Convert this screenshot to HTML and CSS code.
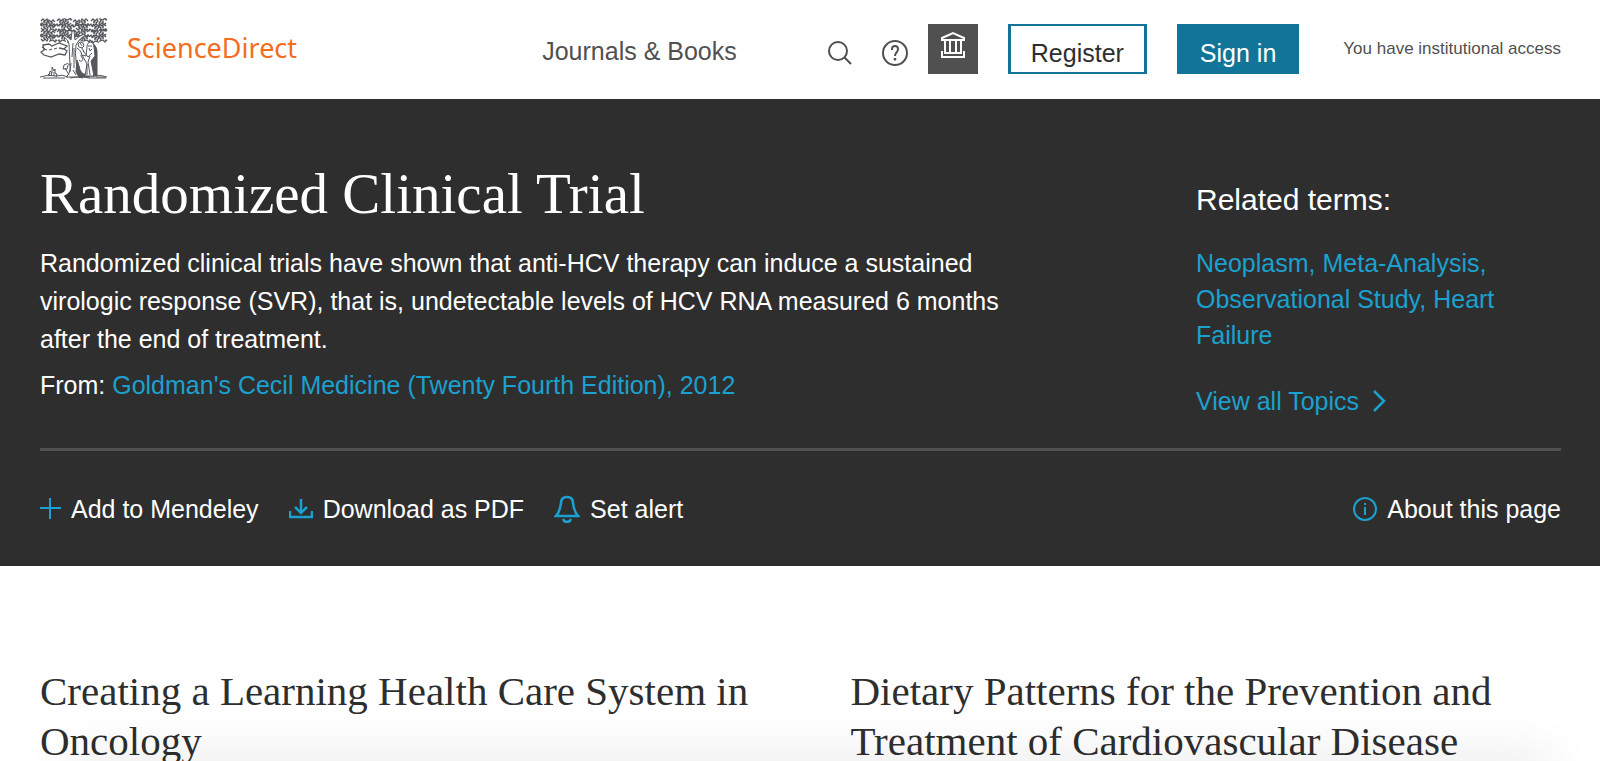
FILE: index.html
```
<!DOCTYPE html>
<html lang="en">
<head>
    <meta charset="UTF-8">
    <meta name="viewport" content="width=device-width, initial-scale=1.0">
    <title>Randomized Clinical Trial - ScienceDirect Topics</title>
    <link rel="stylesheet" href="styles.css">
</head>
<body>
    <header class="header">
        <a class="brand" href="#">
            <svg class="tree" viewBox="0 0 68 62" fill="none" stroke="#54575b" stroke-width="1" aria-hidden="true">
                <defs>
                    <path id="leaf" stroke-width="1.300" d="M1 3l2-2 2 2 2-2 1 2-2 2 1 2-3-1-2 2-1-2-1 1M3 4h2"/>
                    <g id="row">
                        <use href="#leaf"/>
                        <use href="#leaf" transform="translate(16 1) scale(-1 1)"/>
                        <use href="#leaf" x="16"/>
                        <use href="#leaf" transform="translate(32 8) rotate(180)"/>
                        <use href="#leaf" x="32" y="1"/>
                        <use href="#leaf" transform="translate(49 0) scale(-1 1)"/>
                        <use href="#leaf" x="50"/>
                        <use href="#leaf" transform="translate(67 8) rotate(180)"/>
                    </g>
                </defs>
                <use href="#row"/>
                <use href="#row" transform="translate(67 5) scale(-1 1)"/>
                <use href="#row" y="11"/>
                <use href="#row" transform="translate(67 16) scale(-1 1)"/>
                <!-- trunk and branches -->
                <path fill="#fff" d="M29 26q0-4-6-8l1-1q5 3 7 5l1-9h2l1 9q4-4 9-6l1 1q-7 5-9 10q-1 10 0 15l1 10q2 4 8 7H26q5-4 4-12z"/>
                <path d="M33 25l-1 14M34 30v20M31 45l-1 9M33 52l3 5M37 30q6 4 4 8l2 3q-1 4-4 1M24 47q4-3 6 0M24 47l-1 4h4l1-4M25 50l4 7"/>
                <!-- banner -->
                <path stroke-width="1.300" d="M3 27l6-1 3 2 7-3 8 3-3 3 3 2-2 4-6-1-8 3-7-2-3-3 3-2zM4 31l3 1M9 32l3-1M14 31l3-1M19 30l5 1M2 29l3 2"/>
                <!-- old man -->
                <path fill="#54575b" d="M51 25q5 1 6 8v25h-8l2-14zM37 42l2 6 1 4 3 4h5l2 3H39l-3-5z"/>
                <path fill="#fff" d="M47 29q0-5 4-5q3 1 3 5l1 9-4 5 3 15h-9l2-12-5-9 4 1z"/>
                <path d="M48 28h4M49 30l1 3 2-2M43 33l5 6 4-4M50 38l-2 6 2 13M47 46v11M38 26l2-2 3 1 1 3-2 2-3-1zM40 25l2 3M42 30l2 4"/>
                <!-- ground -->
                <path d="M0 59q8-3 16-1q7-2 12 1M3 60h22M30 60q8-2 13 0M42 58l6 2h18M53 58q7-2 14 1M56 59h10"/>
                <path d="M9 58l1-5 2 2v-6l2 4 1-2v4l2 1-1 3M11 55l1 3M14 54v4M8 56l2 2"/>
            </svg>
            <span class="wordmark">ScienceDirect</span>
        </a>
        <nav class="nav">
            <a class="journals" href="#">Journals &amp; Books</a>
            <button class="icon-btn search" type="button" aria-label="Search">
                <svg width="24" height="24" viewBox="0 0 24 24" fill="none" stroke="#505050" stroke-width="2"><circle cx="10" cy="10" r="9"/><path d="M16 16l7 7"/></svg>
            </button>
            <button class="icon-btn help" type="button" aria-label="Help">
                <svg width="26" height="26" viewBox="0 0 26 26" fill="none" stroke="#505050" stroke-width="2"><circle cx="13" cy="13" r="12"/><path d="M10 10V9q0-3 3-3t3 3q0 2-1.500 3.500T13 16"/><path d="M13 18v2.500" stroke-width="2.500"/></svg>
            </button>
            <button class="institution" type="button" aria-label="Institutional access">
                <svg width="26" height="28" viewBox="0 0 26 28" fill="none" stroke="#fff" stroke-width="2"><path d="M2 9V7l11-5 11 5v2zM5 10v12M10 10v12M16 10v12M21 10v12M4 22h18M2 20v6h22v-6"/></svg>
            </button>
            <a class="btn" href="#">Register</a>
            <a class="btn btn-primary" href="#">Sign in</a>
            <span class="access">You have institutional access</span>
        </nav>
    </header>

    <section class="hero">
        <div class="hero-top">
            <div class="summary">
                <h1>Randomized Clinical Trial</h1>
                <p class="definition">Randomized clinical trials have shown that anti-HCV therapy can induce a sustained virologic response (SVR), that is, undetectable levels of HCV RNA measured 6 months after the end of treatment.</p>
                <p class="source">From: <a href="#">Goldman's Cecil Medicine (Twenty Fourth Edition), 2012</a></p>
            </div>
            <aside class="related">
                <h2>Related terms:</h2>
                <p class="terms"><a href="#">Neoplasm, </a><a href="#">Meta-Analysis, </a><a href="#">Observational Study, </a><a href="#">Heart Failure</a></p>
                <a class="view-all" href="#">View all Topics
                    <svg width="14" height="22" viewBox="0 0 14 22" fill="none" stroke="#1ba1cf" stroke-width="2.500"><path d="M2 1l10 10L2 21"/></svg>
                </a>
            </aside>
        </div>
        <div class="toolbar">
            <button class="tool" type="button">
                <svg width="21" height="21" viewBox="0 0 21 21" fill="none" stroke="#1ba1cf" stroke-width="2"><path d="M10 0v21M0 10h21"/></svg>
                Add to Mendeley
            </button>
            <button class="tool" type="button">
                <svg width="24" height="20" viewBox="0 0 24 20" fill="none" stroke="#1ba1cf" stroke-width="2.500"><path d="M12 0v13M6 8l6 6 6-6M1 12v6h22v-6"/></svg>
                Download as PDF
            </button>
            <button class="tool" type="button">
                <svg width="26" height="28" viewBox="0 0 26 28" fill="none" stroke="#1ba1cf" stroke-width="2.500"><path d="M2 21h22c-4-4-4-8-5-13 0-4-2-6-6-6S7 4 7 8c-1 5-1 9-5 13zM9 24q1 3 4 3t4-3"/></svg>
                Set alert
            </button>
            <button class="tool about" type="button">
                <svg width="24" height="24" viewBox="0 0 24 24" fill="none" stroke="#1ba1cf" stroke-width="2"><circle cx="12" cy="12" r="11"/><path d="M12 10v8M12 6v2"/></svg>
                About this page
            </button>
        </div>
    </section>

    <main class="articles">
        <h2>Creating a Learning Health Care System in Oncology</h2>
        <h2>Dietary Patterns for the Prevention and Treatment of Cardiovascular Disease</h2>
    </main>
    <div class="bottom-shadow"></div>
</body>
</html>
```
FILE: styles.css
```
* {
    box-sizing: border-box;
}
body {
    margin: 0;
    background-color: #fff;
    color: #2e2e2e;
    font-family: Arial, "Liberation Sans", sans-serif;
    font-size: 25px;
}
h1, h2, p {
    margin: 0;
    font-weight: normal;
}
a {
    color: #1ba1cf;
    text-decoration: none;
}
button {
    font: inherit;
    border: none;
    padding: 0;
    background: none;
    cursor: pointer;
}
svg {
    display: block;
    flex: none;
}

/* header */
.header {
    display: flex;
    justify-content: space-between;
    align-items: center;
    padding: 18px 39px 19px 40px;
}
.brand {
    display: flex;
    align-items: center;
    gap: 19px;
}
.tree {
    width: 68px;
    height: 62px;
}
.wordmark {
    color: #f36d21;
    font-family: "Noto Sans", sans-serif;
    font-size: 27px;
    line-height: 36px;
    padding-bottom: 2px;
}
.nav {
    display: flex;
    align-items: center;
}
.journals {
    color: #505050;
    line-height: 30px;
    margin-right: 91px;
    padding-top: 4px;
}
.icon-btn {
    padding-top: 8px;
}
.search {
    margin-right: 30px;
}
.help {
    margin-right: 20px;
}
.institution {
    display: flex;
    justify-content: center;
    width: 50px;
    height: 50px;
    margin-right: 30px;
    padding-top: 7px;
    background-color: #505050;
}
.btn {
    height: 50px;
    padding: 12px 20px 0;
    border: 3px solid #107598;
    border-width: 2px 3px;
    color: #2e2e2e;
    line-height: 30px;
    margin-right: 30px;
}
.btn-primary {
    background-color: #107598;
    color: #fff;
    margin-right: 44px;
}
.access {
    color: #505050;
    font-size: 17px;
    line-height: 20px;
}

/* hero */
.hero {
    padding: 62px 39px 0 40px;
    background-color: #2e2e2e;
    color: #fff;
}
.hero-top {
    display: grid;
    grid-template-columns: 1fr 365px;
    padding-bottom: 29px;
    border-bottom: 3px solid #505050;
}
.summary {
    max-width: 980px;
}
h1 {
    font-family: Georgia, "Liberation Serif", serif;
    font-size: 57px;
    line-height: 66px;
    margin-bottom: 17px;
}
.definition {
    line-height: 38px;
    margin-bottom: 9px;
}
.source {
    line-height: 36px;
}
.related h2 {
    font-size: 30px;
    line-height: 36px;
    margin: 21px 0 27px;
}
.terms {
    line-height: 36px;
    margin-bottom: 30px;
}
.view-all {
    display: flex;
    align-items: center;
    gap: 13px;
    line-height: 36px;
}
.toolbar {
    display: flex;
    align-items: center;
    gap: 30px;
    height: 115px;
}
.tool {
    display: flex;
    align-items: center;
    gap: 10px;
    color: #fff;
    line-height: 30px;
}
.about {
    margin-left: auto;
}

/* articles */
.articles {
    display: grid;
    grid-template-columns: 1fr 1fr;
    gap: 100px;
    padding: 100px 39px 0 40px;
}
.articles h2 {
    font-family: Georgia, "Liberation Serif", serif;
    font-size: 41px;
    line-height: 50px;
}
.bottom-shadow {
    position: fixed;
    right: 50px;
    bottom: -20px;
    left: 70px;
    height: 20px;
    box-shadow: 0 0 50px rgba(0, 0, 0, 0.15);
}
```
